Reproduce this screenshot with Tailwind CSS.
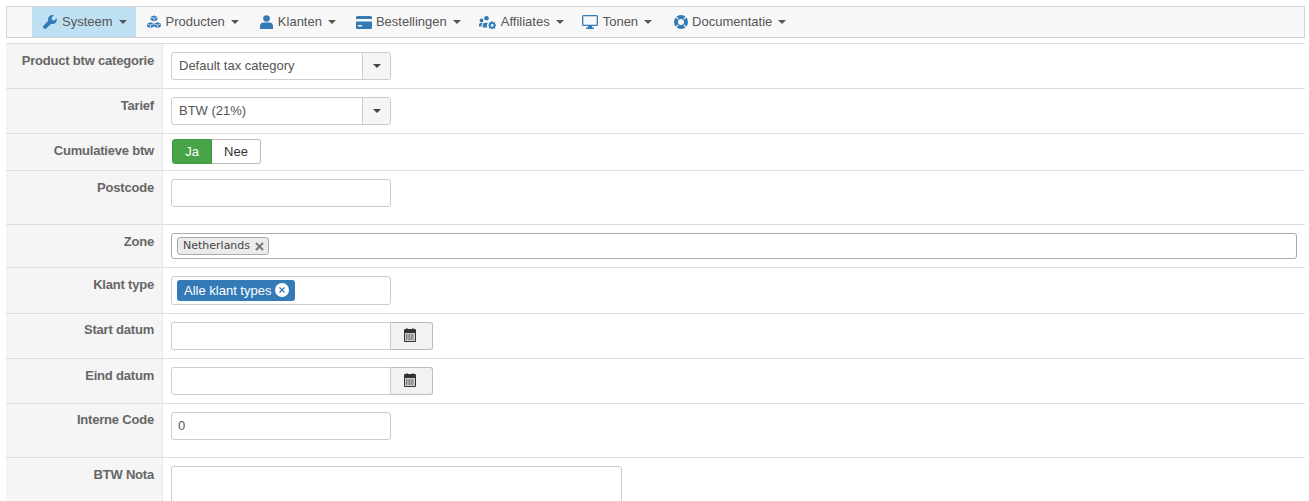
<!DOCTYPE html>
<html lang="nl">
<head>
    <meta charset="UTF-8">
    <meta name="viewport" content="width=device-width, initial-scale=1.0">
    <script src="https://cdn.jsdelivr.net/npm/@tailwindcss/browser@4"></script>
</head>
<body class="bg-white h-screen overflow-hidden font-['Liberation_Sans',Arial,sans-serif] text-[13px] text-[#555]">
    <div class="pt-[6px] pl-[6px] pr-[4px]">
        <!-- Navbar -->
        <nav class="h-[32px] flex items-stretch pl-[25px] bg-[#f8f8f8] border border-[#d4d4d4]">
            <a class="flex items-center gap-[5px] pl-[11px] pr-[9px] bg-[#bfe0f2]">
                <svg class="w-[14px] h-[14px] text-[#337ab7]" viewBox="0 0 16 16" fill="currentColor"><path d="M15.600 3.600 13 6.200l-2.600-.6-.6-2.600L12.400.4C10.600-.3 8.500.1 7.100 1.500 5.700 2.900 5.400 4.900 6 6.600L.7 11.900c-.9.900-.9 2.400 0 3.300.9.900 2.400.900 3.300 0l5.300-5.300c1.700.6 3.700.300 5.100-1.100 1.400-1.400 1.800-3.500 1.200-5.200z"/></svg>
                <span class="mr-[1px]">Systeem</span> <span class="border-x-[4px] border-x-transparent border-t-[4px] border-t-[#555]"></span>
            </a>
            <a class="flex items-center gap-[5px] pl-[11px] pr-[9px]">
                <svg class="w-[14px] h-[14px] text-[#337ab7]" viewBox="0 0 14 14" fill="currentColor"><path d="M7 .5 10.300 1.800V5L7 6.400 3.700 5V1.800z"/><path d="M3.500 7.200 6.800 8.500v3.200L3.500 13.100.2 11.700V8.500z"/><path d="M10.500 7.200l3.300 1.300v3.200l-3.300 1.400-3.300-1.400V8.500z"/><path d="M3.900 2.100 7 3.400l3.100-1.300M7 3.400V6M.4 8.800l3.100 1.300 3.100-1.300M3.500 10.100v2.700M7.400 8.800l3.100 1.300 3.100-1.300M10.500 10.100v2.700" fill="none" stroke="#f8f8f8" stroke-width=".7"/></svg>
                <span>Producten</span> <span class="ml-[1px] border-x-[4px] border-x-transparent border-t-[4px] border-t-[#555]"></span>
            </a>
            <a class="flex items-center gap-[5px] pl-[12px] pr-[9px]">
                <svg class="w-[13px] h-[14px] text-[#337ab7]" viewBox="0 0 13 14" fill="currentColor"><circle cx="6.500" cy="3.500" r="3.300"/><path d="M0 14v-3c0-2 1.500-3.500 3.500-3.500h6c2 0 3.500 1.500 3.500 3.500v3z"/></svg>
                <span>Klanten</span> <span class="ml-[1px] border-x-[4px] border-x-transparent border-t-[4px] border-t-[#555]"></span>
            </a>
            <a class="flex items-center gap-[4px] pl-[11px] pr-[9px]">
                <svg class="w-[16px] h-[13px] text-[#337ab7]" viewBox="0 0 16 13" fill="currentColor"><path d="M1.500 0h13A1.500 1.500 0 0 1 16 1.500V3H0V1.500A1.500 1.500 0 0 1 1.500 0z"/><path fill-rule="evenodd" d="M0 5.500h16v6a1.500 1.500 0 0 1-1.500 1.500h-13A1.500 1.500 0 0 1 0 11.500zM2 9v1.500h4V9z"/></svg>
                <span>Bestellingen</span> <span class="ml-[2px] border-x-[4px] border-x-transparent border-t-[4px] border-t-[#555]"></span>
            </a>
            <a class="flex items-center gap-[5px] pl-[9px] pr-[9px]">
                <svg class="w-[17px] h-[13px] text-[#337ab7]" viewBox="0 0 17 13" fill="currentColor"><circle cx="2.500" cy="4.500" r="1.900"/><circle cx="7.500" cy="2.300" r="2.300"/><path d="M0 10.500V9c0-1.200.8-2 1.900-2h1.600c-.5.600-.9 1.400-.9 2.300v1.200zM3.800 11.500V9c0-1.300 1-2.200 2.200-2.200h3c-.4.800-1.200 1.700-1.200 2.700 0 .8.200 1.400.5 2z"/><path fill-rule="evenodd" d="M12.500 5.200h1.400l.3 1.300 1.200-.5 1 1-.6 1.200 1.200.5v1.400l-1.200.4.600 1.200-1 1-1.200-.6-.3 1.200h-1.400l-.4-1.200-1.200.6-1-1 .6-1.200-1.200-.4V8.700l1.200-.5-.6-1.200 1-1 1.200.5zM13.200 8a1.400 1.400 0 1 0 0 2.800 1.400 1.400 0 0 0 0-2.800z"/></svg>
                <span>Affiliates</span> <span class="ml-[1px] border-x-[4px] border-x-transparent border-t-[4px] border-t-[#555]"></span>
            </a>
            <a class="flex items-center gap-[5px] pl-[9px] pr-[9px]">
                <svg class="w-[16px] h-[14px] text-[#337ab7]" viewBox="0 0 16 14" fill="currentColor"><path fill-rule="evenodd" d="M1.500 0h13A1.500 1.500 0 0 1 16 1.500v8a1.500 1.500 0 0 1-1.500 1.500H10v1.500h2V14H4v-1.500h2V11H1.500A1.500 1.500 0 0 1 0 9.500v-8A1.500 1.500 0 0 1 1.500 0zM1.300 1.300v8.400h13.400V1.300z"/></svg>
                <span>Tonen</span> <span class="ml-[1px] border-x-[4px] border-x-transparent border-t-[4px] border-t-[#555]"></span>
            </a>
            <a class="flex items-center gap-[4px] pl-[13px] pr-[9px]">
                <svg class="w-[14px] h-[14px] text-[#337ab7]" viewBox="0 0 14 14"><circle cx="7" cy="7" r="5" fill="none" stroke="currentColor" stroke-width="4"/><path d="M2 2l2.200 2.200M12 2 9.800 4.200M2 12l2.200-2.200M12 12 9.800 9.800" stroke="#f8f8f8" stroke-width="1.100"/></svg>
                <span>Documentatie</span> <span class="ml-[2px] border-x-[4px] border-x-transparent border-t-[4px] border-t-[#555]"></span>
            </a>
        </nav>

        <!-- Form -->
        <div class="mt-[5px] border-t border-[#ddd]">
            <div class="flex h-[45px] border-b border-[#ddd]">
                <label class="w-[157px] shrink-0 bg-[#f5f5f5] border-r border-[#e8e8e8] pr-[8px] pt-[9px] text-right font-bold text-[#666] tracking-[-0.2px] leading-[16px]">Product btw categorie</label>
                <div class="pl-[8px] pt-[8px]">
                    <div class="flex w-[220px] h-[28px] border border-[#ccc] rounded-[3px]">
                        <span class="flex-1 pl-[7px] leading-[26px] text-[#555]">Default tax category</span>
                        <span class="w-[28px] flex items-center justify-center bg-[#f5f5f5] border-l border-[#ccc] rounded-r-[3px]"><span class="border-x-[4px] border-x-transparent border-t-[4px] border-t-[#444]"></span></span>
                    </div>
                </div>
            </div>
            <div class="flex h-[45px] border-b border-[#ddd]">
                <label class="w-[157px] shrink-0 bg-[#f5f5f5] border-r border-[#e8e8e8] pr-[8px] pt-[9px] text-right font-bold text-[#666] tracking-[-0.2px] leading-[16px]">Tarief</label>
                <div class="pl-[8px] pt-[8px]">
                    <div class="flex w-[220px] h-[28px] border border-[#ccc] rounded-[3px]">
                        <span class="flex-1 pl-[7px] leading-[26px] text-[#555]">BTW (21%)</span>
                        <span class="w-[28px] flex items-center justify-center bg-[#f5f5f5] border-l border-[#ccc] rounded-r-[3px]"><span class="border-x-[4px] border-x-transparent border-t-[4px] border-t-[#444]"></span></span>
                    </div>
                </div>
            </div>
            <div class="flex h-[37px] border-b border-[#ddd]">
                <label class="w-[157px] shrink-0 bg-[#f5f5f5] border-r border-[#e8e8e8] pr-[8px] pt-[9px] text-right font-bold text-[#666] tracking-[-0.2px] leading-[16px]">Cumulatieve btw</label>
                <div class="pl-[9px] pt-[5px]">
                    <div class="flex h-[25px]">
                        <span class="w-[40px] bg-[#47a447] border border-[#419a41] rounded-l-[3px] text-white text-center leading-[23px]">Ja</span>
                        <span class="w-[49px] border border-l-0 border-[#bbb] rounded-r-[3px] text-[#333] text-center leading-[23px]">Nee</span>
                    </div>
                </div>
            </div>
            <div class="flex h-[54px] border-b border-[#ddd]">
                <label class="w-[157px] shrink-0 bg-[#f5f5f5] border-r border-[#e8e8e8] pr-[8px] pt-[9px] text-right font-bold text-[#666] tracking-[-0.2px] leading-[16px]">Postcode</label>
                <div class="pl-[8px] pt-[8px]">
                    <div class="w-[220px] h-[28px] border border-[#ccc] rounded-[3px]"></div>
                </div>
            </div>
            <div class="flex h-[43px] border-b border-[#ddd]">
                <label class="w-[157px] shrink-0 bg-[#f5f5f5] border-r border-[#e8e8e8] pr-[8px] pt-[9px] text-right font-bold text-[#666] tracking-[-0.2px] leading-[16px]">Zone</label>
                <div class="flex-1 pl-[8px] pr-[8px] pt-[8px]">
                    <div class="h-[26px] border border-[#aaa] rounded-[3px] pl-[5px] pt-[3px]">
                        <span class="flex w-max items-center gap-[5px] h-[18px] pl-[5px] pr-[4px] bg-[#ebebeb] border border-[#aaa] rounded-[3px] font-['DejaVu_Sans',sans-serif] text-[11px] text-[#444]">Netherlands <svg class="w-[9px] h-[9px]" viewBox="0 0 9 9"><path d="M1 1l7 7M8 1 1 8" stroke="#777" stroke-width="2"/></svg></span>
                    </div>
                </div>
            </div>
            <div class="flex h-[46px] border-b border-[#ddd]">
                <label class="w-[157px] shrink-0 bg-[#f5f5f5] border-r border-[#e8e8e8] pr-[8px] pt-[9px] text-right font-bold text-[#666] tracking-[-0.2px] leading-[16px]">Klant type</label>
                <div class="pl-[8px] pt-[8px]">
                    <div class="w-[220px] h-[29px] border border-[#ccc] rounded-[3px] pl-[5px] pt-[3px]">
                        <span class="inline-flex items-center gap-[4px] h-[21px] pl-[7px] pr-[6px] bg-[#337ab7] rounded-[3px] text-white">Alle klant types <svg class="w-[14px] h-[14px] mb-[2px]" viewBox="0 0 14 14"><circle cx="7" cy="7" r="7" fill="#fff"/><path d="M4.500 4.500l5 5M9.500 4.500l-5 5" stroke="#337ab7" stroke-width="1.200"/></svg></span>
                    </div>
                </div>
            </div>
            <div class="flex h-[45px] border-b border-[#ddd]">
                <label class="w-[157px] shrink-0 bg-[#f5f5f5] border-r border-[#e8e8e8] pr-[8px] pt-[8px] text-right font-bold text-[#666] tracking-[-0.2px] leading-[16px]">Start datum</label>
                <div class="pl-[8px] pt-[8px]">
                    <div class="flex h-[28px]">
                        <div class="w-[220px] border border-[#ccc] rounded-l-[3px]"></div>
                        <span class="w-[42px] flex items-center pl-[13px] pb-[3px] bg-[#f2f2f2] border border-l-0 border-[#bbb] rounded-r-[3px]">
                            <svg class="w-[12px] h-[14px]" viewBox="0 0 12 14"><path fill="#333" d="M1 1h1.500V0h1v1h5V0h1v1H11a1 1 0 0 1 1 1v11a1 1 0 0 1-1 1H1a1 1 0 0 1-1-1V2a1 1 0 0 1 1-1z"/><path fill="#ccc" d="M1 5h10v8H1z"/><path fill="none" stroke="#333" stroke-dasharray="1 .6" d="M2 7h8M2 9h8M2 11h8"/></svg>
                        </span>
                    </div>
                </div>
            </div>
            <div class="flex h-[45px] border-b border-[#ddd]">
                <label class="w-[157px] shrink-0 bg-[#f5f5f5] border-r border-[#e8e8e8] pr-[8px] pt-[9px] text-right font-bold text-[#666] tracking-[-0.2px] leading-[16px]">Eind datum</label>
                <div class="pl-[8px] pt-[8px]">
                    <div class="flex h-[28px]">
                        <div class="w-[220px] border border-[#ccc] rounded-l-[3px]"></div>
                        <span class="w-[42px] flex items-center pl-[13px] pb-[3px] bg-[#f2f2f2] border border-l-0 border-[#bbb] rounded-r-[3px]">
                            <svg class="w-[12px] h-[14px]" viewBox="0 0 12 14"><path fill="#333" d="M1 1h1.500V0h1v1h5V0h1v1H11a1 1 0 0 1 1 1v11a1 1 0 0 1-1 1H1a1 1 0 0 1-1-1V2a1 1 0 0 1 1-1z"/><path fill="#ccc" d="M1 5h10v8H1z"/><path fill="none" stroke="#333" stroke-dasharray="1 .6" d="M2 7h8M2 9h8M2 11h8"/></svg>
                        </span>
                    </div>
                </div>
            </div>
            <div class="flex h-[54px] border-b border-[#ddd]">
                <label class="w-[157px] shrink-0 bg-[#f5f5f5] border-r border-[#e8e8e8] pr-[8px] pt-[8px] text-right font-bold text-[#666] tracking-[-0.2px] leading-[16px]">Interne Code</label>
                <div class="pl-[8px] pt-[8px]">
                    <div class="w-[220px] h-[28px] border border-[#ccc] rounded-[3px] pl-[6px] leading-[26px]">0</div>
                </div>
            </div>
            <div class="flex h-[80px]">
                <label class="w-[157px] shrink-0 bg-[#f5f5f5] border-r border-[#e8e8e8] pr-[8px] pt-[9px] text-right font-bold text-[#666] tracking-[-0.2px] leading-[16px]">BTW Nota</label>
                <div class="pl-[8px] pt-[8px]">
                    <div class="w-[451px] h-[80px] border border-[#ccc] rounded-[3px]"></div>
                </div>
            </div>
        </div>
    </div>
</body>
</html>
